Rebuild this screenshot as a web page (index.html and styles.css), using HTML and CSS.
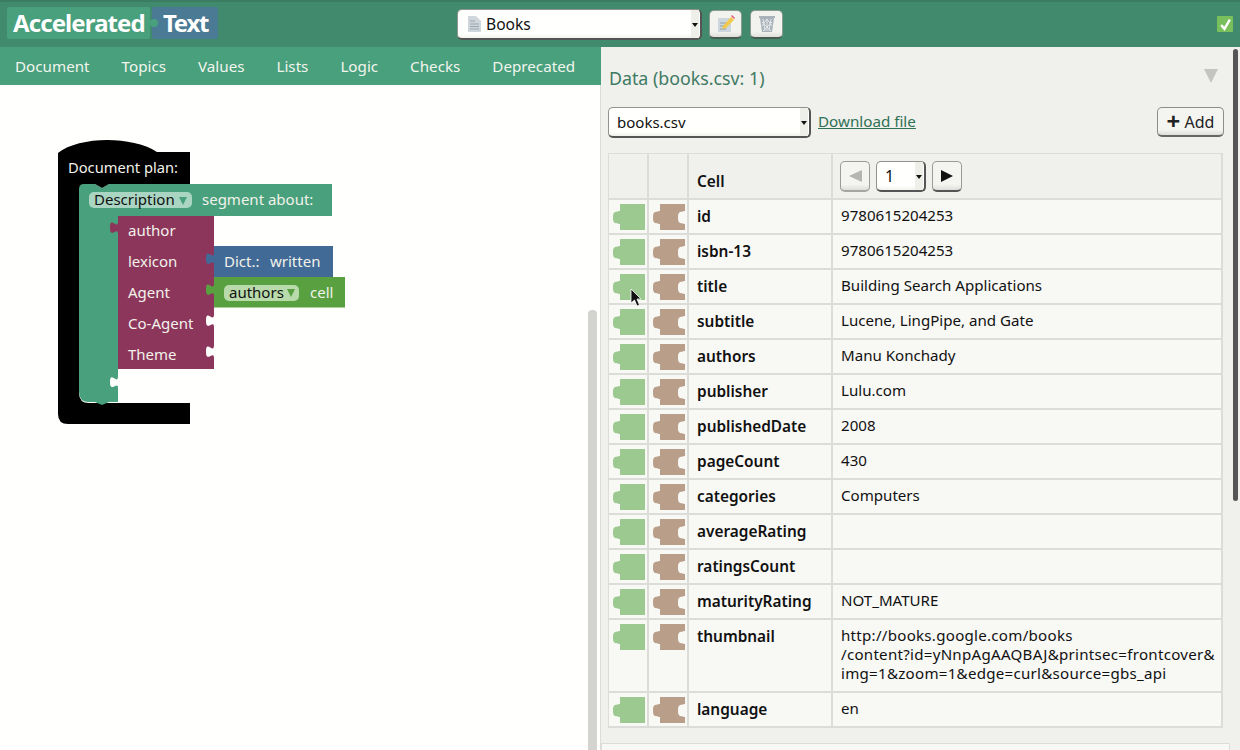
FILE: index.html
```html
<!DOCTYPE html>
<html lang="en">
<head>
  <meta charset="UTF-8">
  <title>Accelerated Text</title>
  <link rel="stylesheet" href="styles.css">
</head>
<body>
  <svg width="0" height="0" class="defs">
    <symbol id="piece-green" viewBox="0 0 32 26"><path d="M7 0H32V26H7V20H6C4 19 4 19.500 2 19C0 18 0 16 0 13.500S0 9 2 8C4 7.500 4 8 6 7H7Z"/></symbol>
    <symbol id="piece-brown" viewBox="0 0 32 26"><path d="M7 0H32V7H31C29 8 29 7.500 27 8C25 9 25 11 25 13.500S25 18 27 19C29 19.500 29 19 31 20H32V26H7V20H6C4 19 4 19.500 2 19C0 18 0 16 0 13.500S0 9 2 8C4 7.500 4 8 6 7H7Z"/></symbol>
  </svg>

  <header class="top-bar">
    <div class="logo">
      <span class="logo-a">Accelerated</span><span class="logo-b">Text</span>
    </div>
    <div class="plan-controls">
      <div class="select select-plan">
        <svg class="doc-icon" width="14" height="16" viewBox="0 0 14 16"><path fill="#cfd6dc" d="M1 0H9L14 5V16H1Z"/><path stroke="#9aa6b0" d="M3 5H8M3 8H12M3 10.500H12M3 13H12"/></svg>
        <span>Books</span>
        <i class="select-arrow"></i>
      </div>
      <button class="icon-btn">
        <svg width="18" height="18" viewBox="0 0 18 18"><rect x="1" y="3" width="13" height="14" fill="#cdd6dc"/><path stroke="#8f9ca6" d="M3 8H11M3 11H9M3 14H9"/><path fill="#f2c94c" d="M6 11L14 2L17 5L9 13L5 14Z"/><path fill="#e2557a" d="M14 1L15 0L18 3L17 4Z"/></svg>
      </button>
      <button class="icon-btn">
        <svg width="16" height="18" viewBox="0 0 16 18"><path fill="#a7b2bb" d="M0 1H16V3H15L13 17H3L1 3H0Z"/><path stroke="#e6e8e8" d="M4 4L6 16M8 4V16M12 4L10 16M3 7L12 16M13 7L4 16M3 11L8 4M13 11L8 4"/></svg>
      </button>
    </div>
    <div class="status-ok">
      <svg width="13" height="13" viewBox="0 0 12 12"><path fill="none" stroke="#fff" stroke-width="2.200" d="M2 6.500L5 10L10 1.500"/></svg>
    </div>
  </header>

  <main class="workspace">
    <section class="editor">
      <nav class="toolbox">
        <a>Document</a>
        <a>Topics</a>
        <a>Values</a>
        <a>Lists</a>
        <a>Logic</a>
        <a>Checks</a>
        <a>Deprecated</a>
      </nav>
      <div class="canvas">
        <svg class="blocks" width="360" height="350" viewBox="0 0 360 350">
          <!-- document plan -->
          <path fill="#000" d="M58 68C78 52 130 50 157 67H190V99H89Q79 99 79 109V308Q79 318 89 318H190V339H68Q58 339 58 329Z"/>
          <!-- segment -->
          <path fill="#49a07c" d="M84 99H95L102 103L109 99H332V131H118V317H109L102 320L95 317H89Q79 317 79 307V104Q79 99 84 99Z"/>
          <path fill="#000" d="M95 99H109L102 103Z"/>
          <path fill="#fffffd" d="M118 291c0 10 -8 -6 -8 6s8 -2 8 6z"/>
          <!-- amr block -->
          <path fill="#8d365c" d="M118 131H214V284H118Z"/>
          <path fill="#8d365c" d="M118 136c0 10 -8 -6 -8 6.500s8 -2 8 6.500z"/>
          <path fill="#fffffd" d="M214 229c0 10 -8 -6 -8 6.500s8 -2 8 6.500z"/>
          <path fill="#fffffd" d="M214 260c0 10 -8 -6 -8 6.500s8 -2 8 6.500z"/>
          <!-- dictionary item and cell -->
          <path fill="#426a96" d="M214 161H333V192H214ZM214 167c0 10 -8 -6 -8 6.500s8 -2 8 6.500z"/>
          <path fill="#58a040" d="M214 192H345V222.500H214ZM214 198c0 10 -8 -6 -8 6.500s8 -2 8 6.500z"/>
          <rect x="89" y="107" width="103" height="16" rx="5" fill="#a9d5c2"/>
          <rect x="224" y="200" width="75" height="16" rx="5" fill="#b9dbab"/>
          <path fill="#49a07c" d="M179 112H187L183 120Z"/>
          <path fill="#58a040" d="M287 204H295L291 212Z"/>
          <g class="block-text">
            <text class="plan-label" x="68" y="88">Document plan:</text>
            <text x="202" y="120">segment about:</text>
            <text x="128" y="151">author</text>
            <text x="128" y="182">lexicon</text>
            <text x="128" y="213">Agent</text>
            <text x="128" y="244">Co-Agent</text>
            <text x="128" y="275">Theme</text>
            <text x="224" y="182">Dict.:</text>
            <text x="270" y="182">written</text>
            <text x="310" y="213">cell</text>
          </g>
          <g class="block-text dark">
            <text x="94" y="120">Description</text>
            <text x="229" y="213">authors</text>
          </g>
        </svg>
        <div class="scroll-v"></div>
      </div>
    </section>

    <section class="data-panel">
      <div class="panel-title">
        <h2>Data (books.csv: 1)</h2>
        <i class="collapse"></i>
      </div>
      <div class="file-row">
        <div class="select select-file"><span>books.csv</span><i class="select-arrow"></i></div>
        <a class="download">Download file</a>
        <button class="add-btn"><b>+</b> Add</button>
      </div>
      <table class="cells">
        <thead>
          <tr>
            <th class="col-piece"></th>
            <th class="col-piece"></th>
            <th class="col-name"><span class="cell-head">Cell</span></th>
            <th class="col-value">
              <div class="pager">
                <button class="page-btn off"><i class="tri-left"></i></button>
                <div class="select select-page"><span>1</span><i class="select-arrow"></i></div>
                <button class="page-btn"><i class="tri-right"></i></button>
              </div>
            </th>
          </tr>
        </thead>
        <tbody>
          <tr><td class="pc"><svg class="piece green"><use href="#piece-green"/></svg></td><td class="pc"><svg class="piece brown"><use href="#piece-brown"/></svg></td><th>id</th><td>9780615204253</td></tr>
          <tr><td class="pc"><svg class="piece green"><use href="#piece-green"/></svg></td><td class="pc"><svg class="piece brown"><use href="#piece-brown"/></svg></td><th>isbn-13</th><td>9780615204253</td></tr>
          <tr><td class="pc"><svg class="piece green"><use href="#piece-green"/></svg></td><td class="pc"><svg class="piece brown"><use href="#piece-brown"/></svg></td><th>title</th><td>Building Search Applications</td></tr>
          <tr><td class="pc"><svg class="piece green"><use href="#piece-green"/></svg></td><td class="pc"><svg class="piece brown"><use href="#piece-brown"/></svg></td><th>subtitle</th><td>Lucene, LingPipe, and Gate</td></tr>
          <tr><td class="pc"><svg class="piece green"><use href="#piece-green"/></svg></td><td class="pc"><svg class="piece brown"><use href="#piece-brown"/></svg></td><th>authors</th><td>Manu Konchady</td></tr>
          <tr><td class="pc"><svg class="piece green"><use href="#piece-green"/></svg></td><td class="pc"><svg class="piece brown"><use href="#piece-brown"/></svg></td><th>publisher</th><td>Lulu.com</td></tr>
          <tr><td class="pc"><svg class="piece green"><use href="#piece-green"/></svg></td><td class="pc"><svg class="piece brown"><use href="#piece-brown"/></svg></td><th>publishedDate</th><td>2008</td></tr>
          <tr><td class="pc"><svg class="piece green"><use href="#piece-green"/></svg></td><td class="pc"><svg class="piece brown"><use href="#piece-brown"/></svg></td><th>pageCount</th><td>430</td></tr>
          <tr><td class="pc"><svg class="piece green"><use href="#piece-green"/></svg></td><td class="pc"><svg class="piece brown"><use href="#piece-brown"/></svg></td><th>categories</th><td>Computers</td></tr>
          <tr><td class="pc"><svg class="piece green"><use href="#piece-green"/></svg></td><td class="pc"><svg class="piece brown"><use href="#piece-brown"/></svg></td><th>averageRating</th><td></td></tr>
          <tr><td class="pc"><svg class="piece green"><use href="#piece-green"/></svg></td><td class="pc"><svg class="piece brown"><use href="#piece-brown"/></svg></td><th>ratingsCount</th><td></td></tr>
          <tr><td class="pc"><svg class="piece green"><use href="#piece-green"/></svg></td><td class="pc"><svg class="piece brown"><use href="#piece-brown"/></svg></td><th>maturityRating</th><td>NOT_MATURE</td></tr>
          <tr><td class="pc"><svg class="piece green"><use href="#piece-green"/></svg></td><td class="pc"><svg class="piece brown"><use href="#piece-brown"/></svg></td><th>thumbnail</th><td class="long">http://books.google.com/books<br>/content?id=yNnpAgAAQBAJ&amp;printsec=frontcover&amp;<br>img=1&amp;zoom=1&amp;edge=curl&amp;source=gbs_api</td></tr>
          <tr><td class="pc"><svg class="piece green"><use href="#piece-green"/></svg></td><td class="pc"><svg class="piece brown"><use href="#piece-brown"/></svg></td><th>language</th><td>en</td></tr>
        </tbody>
      </table>
      <div class="next-box"></div>
      <div class="scroll-main"></div>
    </section>
  </main>

  <svg class="cursor" width="12" height="19" viewBox="0 0 12 19"><path fill="#111" stroke="#fff" stroke-width=".8" d="M1 1V15L4.500 12L7 18L9.500 17L7 11H11Z"/></svg>
</body>
</html>
```

FILE: styles.css
```css
* {
  box-sizing: border-box;
}
html, body {
  margin: 0;
  height: 750px;
  overflow: hidden;
}
body {
  font-family: "Noto Sans", "Open Sans", sans-serif;
  font-size: 15.2px;
  color: #111;
  background: #fffffd;
  position: relative;
}
.defs {
  position: absolute;
}
.top-bar {
  height: 47px;
  background: #418a6e;
  border-top: 2px solid #3a7d63;
  display: flex;
  position: relative;
}
.logo {
  display: flex;
  margin: 5px 0 0 7px;
  height: 32px;
  font-weight: 700;
  font-size: 24px;
  letter-spacing: -.9px;
  color: #fff;
  line-height: 31px;
}
.logo-a {
  background: #49a07c;
  padding-left: 6px;
  border-radius: 2px;
  width: 143px;
  white-space: nowrap;
}
.logo-b {
  position: relative;
  background: #4a7a94;
  padding-left: 11px;
  margin-left: 2px;
  border-radius: 2px;
  width: 66px;
  letter-spacing: -1.300px;
}
.logo-b::before {
  content: "";
  position: absolute;
  left: -2px;
  top: 12px;
  width: 8px;
  height: 8px;
  border-radius: 50%;
  background: #49a07c;
}
.plan-controls {
  position: absolute;
  left: 457px;
  top: 7px;
  display: flex;
  gap: 7px;
  align-items: flex-start;
}
.select {
  position: relative;
  display: flex;
  align-items: center;
  background: linear-gradient(#fffffd 85%, #f0f0ec);
  border: 1px solid #8f948f;
  border-bottom: 2px solid #555;
  border-right: 2px solid #555;
  border-radius: 5px;
  height: 31px;
}
.select-arrow {
  position: absolute;
  right: 1px;
  top: 0;
  bottom: 0;
  width: 8px;
  background: #efefea;
}
.select-arrow::after {
  content: "";
  position: absolute;
  left: 1px;
  top: 13px;
  border: 3px solid transparent;
  border-top: 4px solid #111;
}
.select-plan {
  width: 245px;
  padding-left: 9px;
  gap: 5px;
  font-size: 15.600px;
}
.icon-btn {
  width: 33px;
  height: 29px;
  margin-top: 1px;
  padding: 0;
  display: flex;
  align-items: center;
  justify-content: center;
  background: linear-gradient(#f2f2ee 80%, #dededa);
  border: 1px solid #8a9a90;
  border-bottom: 2px solid #4a5a52;
  border-radius: 5px;
}
.icon-btn + .icon-btn {
  margin-left: 1px;
}
.status-ok {
  position: absolute;
  right: 7px;
  top: 14px;
  width: 16px;
  height: 16px;
  background: #79bf5c;
  border-radius: 1px;
  display: flex;
  align-items: center;
  justify-content: center;
}
.workspace {
  display: flex;
  height: 703px;
}
.editor {
  width: 601px;
  position: relative;
}
.toolbox {
  height: 38px;
  background: #49a07c;
  display: flex;
  align-items: center;
  padding-left: 15px;
  gap: 32px;
  color: #f2f5ee;
  white-space: nowrap;
}
.canvas {
  height: 665px;
  position: relative;
  border-right: 1px solid #dcdcd8;
}
.blocks {
  display: block;
}
.block-text text {
  fill: #f2f2ea;
  font-size: 15px;
}
.block-text .plan-label {
  font-size: 14.700px;
}
.block-text.dark text {
  fill: #111;
}
.scroll-v {
  position: absolute;
  right: 3px;
  top: 225px;
  bottom: 0;
  width: 9px;
  background: #d3d4cf;
  border-radius: 4px 4px 0 0;
}
.data-panel {
  flex: 1;
  background: #f0f0ec;
  position: relative;
  padding: 0 16px 0 7px;
  overflow: hidden;
}
.panel-title {
  height: 60px;
  display: flex;
  align-items: center;
  justify-content: space-between;
}
.panel-title h2 {
  margin: 2px 0 0 1px;
  font-size: 17.800px;
  font-weight: 400;
  color: #3f7a63;
}
.collapse {
  border: 7px solid transparent;
  border-top: 14px solid #c4c4c0;
  border-bottom: 0;
  margin: -3px 6px 0 0;
}
.file-row {
  display: flex;
  align-items: flex-start;
  height: 32px;
}
.select-file {
  width: 203px;
  padding-left: 8px;
  font-size: 15px;
}
.download {
  margin: 4px 0 0 7px;
  color: #2f7155;
  text-decoration: underline;
}
.add-btn {
  margin-left: auto;
  width: 67px;
  height: 30px;
  padding: 0;
  font: inherit;
  font-size: 16px;
  background: linear-gradient(#f4f4f0 80%, #dededa);
  border: 1px solid #8a8f8a;
  border-bottom: 2px solid #666;
  border-radius: 5px;
  color: #222;
}
.add-btn b {
  font-size: 24px;
  line-height: 16px;
  vertical-align: -2px;
}
.cells {
  margin-top: 14px;
  width: 615px;
  border-collapse: separate;
  border-spacing: 0;
  table-layout: fixed;
  background: #f8f8f5;
  border-left: 1px solid #dcdcd8;
  border-top: 1px solid #dcdcd8;
}
.cells td, .cells th {
  border-right: 2px solid #dcdcd8;
  border-bottom: 2px solid #dcdcd8;
  padding: 6px 8px 0;
  height: 35px;
  text-align: left;
  vertical-align: top;
  line-height: 19px;
  font-size: 15.100px;
}
.cells th {
  font-weight: 600;
  font-size: 15.400px;
  padding-top: 7px;
}
.cells td.long {
  white-space: nowrap;
  letter-spacing: .27px;
  padding-bottom: 8px;
}
.cells thead th {
  background: #f0f0ec;
  height: 46px;
}
.col-piece {
  width: 40px;
}
.col-name {
  width: 144px;
}
.cell-head {
  display: block;
  margin-top: 11px;
}
.cells .col-value {
  padding: 7px 7px 0;
}
.pager {
  display: flex;
  align-items: center;
  gap: 6px;
}
.page-btn {
  width: 30px;
  height: 31px;
  padding: 0;
  display: flex;
  align-items: center;
  justify-content: center;
  background: linear-gradient(#f4f4f0 80%, #dededa);
  border: 1px solid #9a9a96;
  border-bottom: 2px solid #555;
  border-radius: 5px;
}
.page-btn.off {
  border-bottom-color: #a5a5a1;
}
.tri-left {
  border: 6.500px solid transparent;
  border-right: 13px solid #b5b5b1;
  border-left: 0;
}
.tri-right {
  border: 6px solid transparent;
  border-left: 12px solid #111;
  border-right: 0;
}
.select-page {
  width: 50px;
  padding-left: 8px;
  font-weight: 400;
  font-size: 16px;
}
.cells td.pc {
  padding: 4px 0 0 4px;
  line-height: 0;
}
.piece {
  width: 32px;
  height: 26px;
}
.piece.green {
  fill: #9bc98f;
}
.piece.brown {
  fill: #b99f8a;
}
.next-box {
  margin: 15px -6px 0 -7px;
  height: 12px;
  background: #f8f8f5;
  border: 1px solid #dcdcd8;
}
.scroll-main {
  position: absolute;
  right: 2px;
  top: 2px;
  width: 5px;
  height: 452px;
  background: #555;
  border-radius: 3px;
}
.cursor {
  position: absolute;
  left: 630px;
  top: 288px;
}
```
